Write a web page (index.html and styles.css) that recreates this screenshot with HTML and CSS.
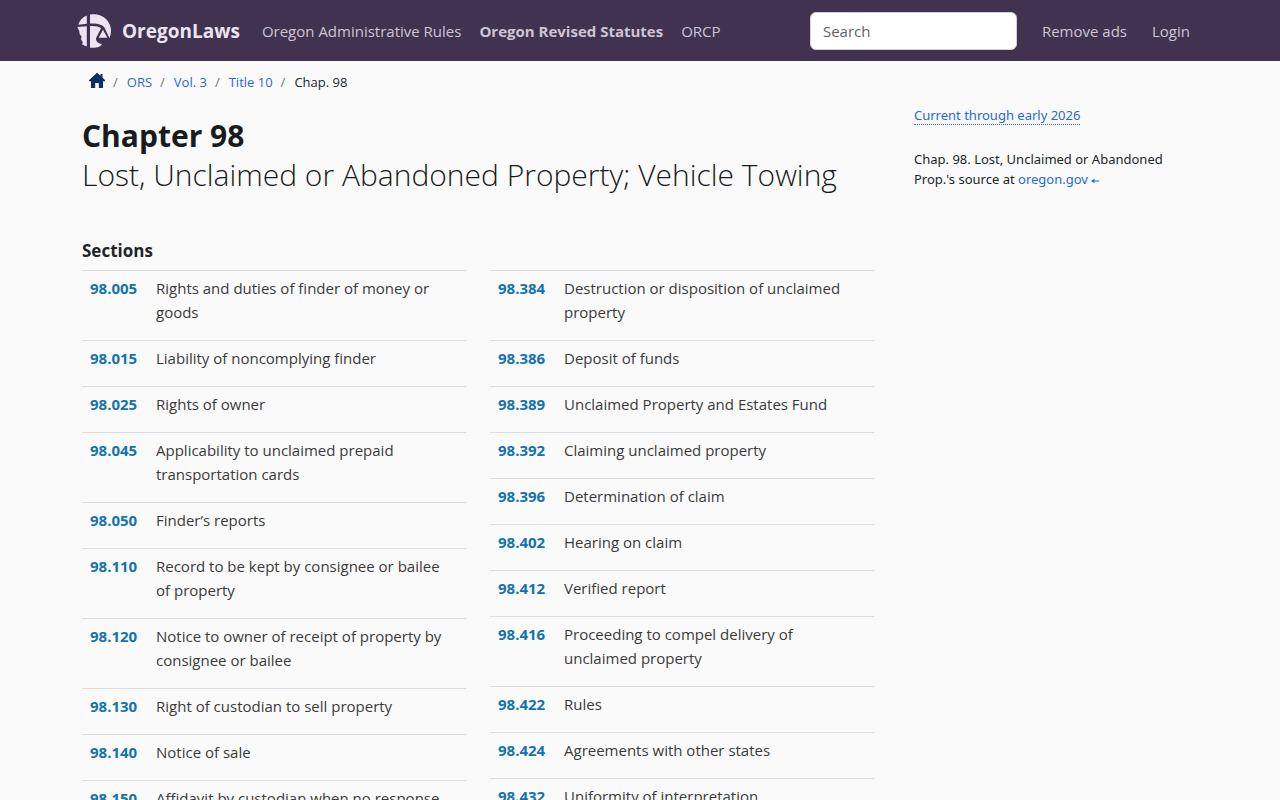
FILE: index.html
```html
<!DOCTYPE html>
<html lang="en">
<head>
    <meta charset="UTF-8">
    <meta name="viewport" content="width=device-width, initial-scale=1.0">
    <title>ORS Chapter 98 – Lost, Unclaimed or Abandoned Property; Vehicle Towing</title>
    <link rel="stylesheet" href="styles.css">
</head>
<body>

<header class="navbar">
    <div class="container navbar-inner">
        <a class="brand" href="#">
            <svg class="brand-logo" viewBox="0 0 34 34" aria-hidden="true">
                <path fill="#ece4f2" d="M9.800 1.600V9.800L1.300 10.700C3 6 5.500 3.200 9.800 1.600z"/>
                <path fill="#ece4f2" d="M.4 13L9.800 12.200V32.600L5.200 30.500 5.800 28 4 25.500 4.600 22.500 2.600 20 2.400 17.500z"/>
                <path fill="#ece4f2" d="M13 .6C23 -1.500 32 4.500 33.800 14C34.300 18 33.700 21 32.400 24L27.300 13.300C24.500 10.300 20.500 9.300 13 9.600z"/>
                <path fill="#ece4f2" d="M13 12C18.500 11.700 21.500 12.300 24 14.200L18.900 24.600C19 27.500 21 29.500 24.800 30.200C24.500 32.300 20 34.200 13 33.700z"/>
                <path fill="#ece4f2" d="M26 15.800L30.300 23.800H21.700z"/>
            </svg>
            OregonLaws
        </a>
        <nav class="nav-main">
            <a href="#">Oregon Administrative Rules</a>
            <a class="active" href="#">Oregon Revised Statutes</a>
            <a href="#">ORCP</a>
        </nav>
        <form class="search">
            <input type="search" placeholder="Search" aria-label="Search">
        </form>
        <nav class="nav-user">
            <a href="#">Remove ads</a>
            <a href="#">Login</a>
        </nav>
    </div>
</header>

<div class="container page">
    <main>
        <nav aria-label="Breadcrumb">
            <ol class="breadcrumb">
                <li>
                    <a href="#" aria-label="Home">
                        <svg class="home-icon" viewBox="0 0 16 16" aria-hidden="true">
                            <path fill="#0a2f66" d="M8 .8L11.500 3.800V2H13.500V5.500L16 8.200V9.200H14V16H9.800V11H6.200V16H2V9.200H0V8.200z"/>
                        </svg>
                    </a>
                </li>
                <li><a href="#">ORS</a></li>
                <li><a href="#">Vol. 3</a></li>
                <li><a href="#">Title 10</a></li>
                <li>Chap. 98</li>
            </ol>
        </nav>

        <h1>
            <span class="chapter-number">Chapter 98</span>
            <span class="chapter-name">Lost, Unclaimed or Abandoned Property; Vehicle Towing</span>
        </h1>

        <h2>Sections</h2>
        <div class="sections">
            <ul class="section-list">
                <li><a href="#">98.005</a><span>Rights and duties of finder of money or goods</span></li>
                <li><a href="#">98.015</a><span>Liability of noncomplying finder</span></li>
                <li><a href="#">98.025</a><span>Rights of owner</span></li>
                <li><a href="#">98.045</a><span>Applicability to unclaimed prepaid transportation cards</span></li>
                <li><a href="#">98.050</a><span>Finder’s reports</span></li>
                <li><a href="#">98.110</a><span>Record to be kept by consignee or bailee of property</span></li>
                <li><a href="#">98.120</a><span>Notice to owner of receipt of property by consignee or bailee</span></li>
                <li><a href="#">98.130</a><span>Right of custodian to sell property</span></li>
                <li><a href="#">98.140</a><span>Notice of sale</span></li>
                <li><a href="#">98.150</a><span>Affidavit by custodian when no response</span></li>
            </ul>
            <ul class="section-list">
                <li><a href="#">98.384</a><span>Destruction or disposition of unclaimed property</span></li>
                <li><a href="#">98.386</a><span>Deposit of funds</span></li>
                <li><a href="#">98.389</a><span>Unclaimed Property and Estates Fund</span></li>
                <li><a href="#">98.392</a><span>Claiming unclaimed property</span></li>
                <li><a href="#">98.396</a><span>Determination of claim</span></li>
                <li><a href="#">98.402</a><span>Hearing on claim</span></li>
                <li><a href="#">98.412</a><span>Verified report</span></li>
                <li><a href="#">98.416</a><span>Proceeding to compel delivery of unclaimed property</span></li>
                <li><a href="#">98.422</a><span>Rules</span></li>
                <li><a href="#">98.424</a><span>Agreements with other states</span></li>
                <li><a href="#">98.432</a><span>Uniformity of interpretation</span></li>
            </ul>
        </div>
    </main>

    <aside class="sidebar">
        <p><a class="current" href="#">Current through early 2026</a></p>
        <p>Chap. 98. Lost, Unclaimed or Abandoned Prop.'s source at <a href="#">oregon.gov <svg class="arrow" viewBox="0 0 8 6" aria-hidden="true"><path fill="#2969d6" d="M0 3L3.500 .8V2.500H8V3.500H3.500V5.200z"/></svg></a></p>
    </aside>
</div>

</body>
</html>
```
FILE: styles.css
```css
* {
    box-sizing: border-box;
}
body {
    margin: 0;
    font-family: "Open Sans", "Noto Sans", sans-serif;
    font-size: 15px;
    line-height: 24px;
    color: #212529;
    background-color: #fafafa;
}
a {
    color: #2969d6;
    text-decoration: none;
}
.container {
    max-width: 1140px;
    margin: 0 auto;
    padding: 0 12px;
}

/* top bar */
.navbar {
    background-color: #41324f;
}
.navbar-inner {
    display: flex;
    align-items: center;
    min-height: 61px;
    padding: 0 20px 0 7px;
}
.navbar a {
    color: #cdc5d4;
    white-space: nowrap;
}
.navbar .brand {
    display: flex;
    align-items: center;
    gap: 11px;
    margin-right: 22px;
    font-size: 19px;
    font-weight: 700;
    color: #ece4f2;
}
.brand-logo {
    width: 34px;
    height: 34px;
}
.nav-main {
    display: flex;
    gap: 18px;
}
.nav-main .active {
    font-weight: 700;
}
.search {
    flex: 0 0 207px;
    margin-left: auto;
}
.search input {
    display: block;
    width: 100%;
    height: 38px;
    padding: 6px 12px;
    border: 1px solid #ced4da;
    border-radius: 6px;
    font: inherit;
    color: #212529;
    background-color: #fff;
}
.search input::placeholder {
    color: #5f6368;
    opacity: 1;
}
.nav-user {
    display: flex;
    gap: 25px;
    margin-left: 25px;
}

/* page */
.page {
    display: grid;
    grid-template-columns: minmax(0, 792fr) minmax(0, 284fr);
    gap: 40px;
}
.breadcrumb {
    display: flex;
    margin: 11px 0 23px;
    padding: 0 7px;
    list-style: none;
    font-size: 13px;
    line-height: 21px;
}
.breadcrumb li + li::before {
    content: "/";
    padding: 0 9px 0 8px;
    color: #6c757d;
}
.home-icon {
    display: block;
    width: 16px;
    height: 16px;
}
h1 {
    margin: 0 0 45px;
    color: #191b1d;
    font-size: 30px;
    line-height: 39px;
}
.chapter-number,
.chapter-name {
    display: block;
}
.chapter-name {
    font-weight: 300;
}
h2 {
    margin: 0 0 7px;
    font-size: 17px;
    line-height: 24px;
}
.sections {
    display: grid;
    grid-template-columns: 1fr 1fr;
    gap: 24px;
}
.section-list {
    margin: 0;
    padding: 0;
    list-style: none;
}
.section-list li {
    display: flex;
    padding: 5px 16px 16px 8px;
    border-top: 1px solid #dcdde0;
    color: #3a3a3a;
}
.section-list a {
    flex: 0 0 66px;
    font-weight: 700;
    color: #1373b0;
}

/* right column */
.sidebar {
    padding-top: 44px;
    font-family: "Noto Sans", sans-serif;
    font-size: 13px;
    line-height: 20px;
}
.sidebar p {
    margin: 0 0 24px;
}
.current {
    border-bottom: 1px dotted #2969d6;
}
.arrow {
    width: 8px;
    height: 6px;
}
```
